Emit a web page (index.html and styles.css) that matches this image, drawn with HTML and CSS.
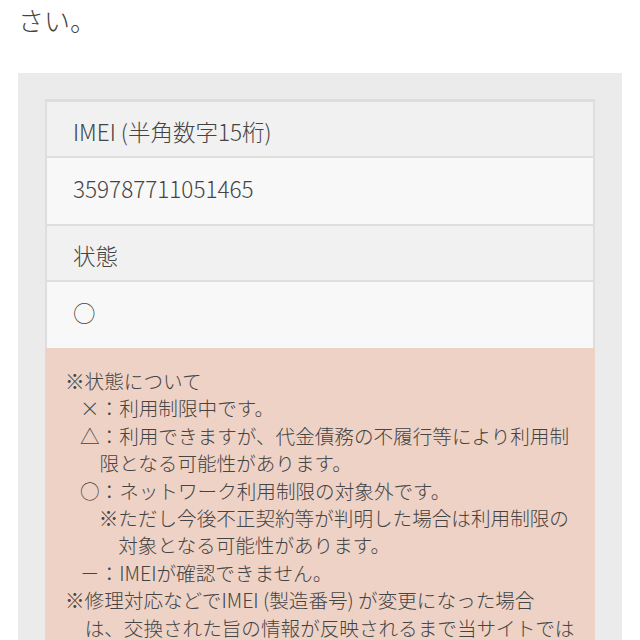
FILE: index.html
```html
<!DOCTYPE html>
<html lang="ja">
<head>
  <meta charset="UTF-8">
  <meta name="viewport" content="width=device-width, initial-scale=1.0">
  <title>ネットワーク利用制限確認結果</title>
  <link rel="stylesheet" href="styles.css">
</head>
<body>
  <p class="lead">さい。</p>

  <div class="panel">
    <div class="result">
      <div class="row head">IMEI (半角数字15桁)</div>
      <div class="row value">359787711051465</div>
      <div class="row head">状態</div>
      <div class="row value">○</div>

      <div class="notes">
        <p class="note">※状態について</p>
        <ul class="marks">
          <li>×：利用制限中です。</li>
          <li>△：利用できますが、代金債務の不履行等により利用制限となる可能性があります。</li>
          <li>○：ネットワーク利用制限の対象外です。
            <p class="sub">※ただし今後不正契約等が判明した場合は利用制限の対象となる可能性があります。</p>
          </li>
          <li>－：IMEIが確認できません。</li>
        </ul>
        <p class="note">※修理対応などでIMEI (製造番号) が変更になった場合<br>は、交換された旨の情報が反映されるまで当サイトでは正しく確認できない場合があります。</p>
      </div>
    </div>
  </div>
</body>
</html>
```

FILE: styles.css
```css
body {
  font-family: "Noto Sans CJK JP", "Noto Sans", sans-serif;
  font-weight: 300;
  color: #444;
  background-color: #fff;
  margin: 0;
  padding: 0;
}
.lead {
  margin: 0;
  padding: 0 18px;
  font-size: 26px;
  line-height: 40px;
}
.panel {
  background-color: #ebebeb;
  margin: 33px 18px 0;
  padding: 26px 27px 40px;
}
.result {
  border: 2px solid #dedede;
  border-top-width: 1px;
}
.row {
  font-size: 22.5px;
  line-height: 30px;
  padding: 0 26px;
  border-top: 2px solid #dedede;
}
.head {
  background-color: #f1f1f1;
  padding-top: 14px;
  padding-bottom: 10px;
}
.value {
  background-color: #f8f8f8;
  padding-top: 15px;
  padding-bottom: 21px;
}
.notes {
  background-color: #eed2c6;
  margin: 0 -2px -2px;
  padding: 19px 16px 24px 22px;
  font-size: 19.6px;
  line-height: 27.4px;
}
.note {
  margin: 0;
  padding-left: 0.9em;
  text-indent: -1em;
}
.marks {
  list-style: none;
  margin: 0 0 0 13px;
  padding: 0;
}
.marks li {
  padding-left: 1em;
  text-indent: -1em;
}
.sub {
  margin: 0 0 0 3px;
  padding-left: 0.8em;
  text-indent: -1em;
}
```
